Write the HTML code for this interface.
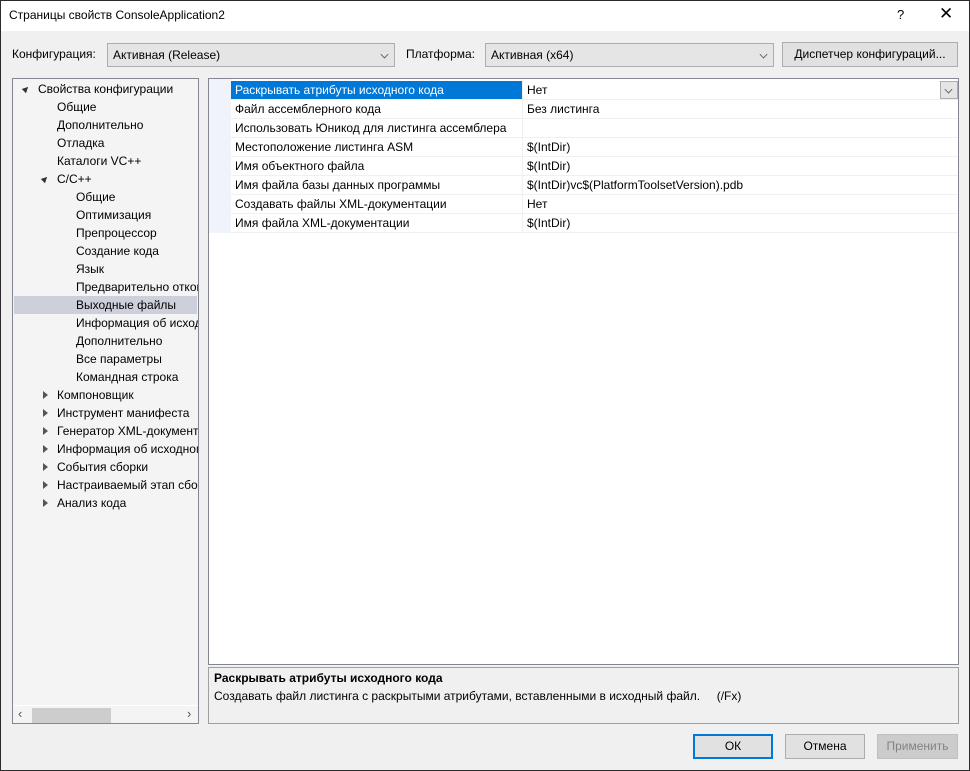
<!DOCTYPE html>
<html><head><meta charset="utf-8"><style>
*{margin:0;padding:0;box-sizing:border-box}
body{width:970px;height:771px;overflow:hidden;background:#f0f0f0;font-family:"Liberation Sans","Noto Sans CJK SC",sans-serif;font-size:12px;color:#000;position:relative}
.win{position:absolute;left:0;top:0;width:970px;height:771px;border:1px solid #2b2b2b}
.a{position:absolute;white-space:nowrap}
.title{left:1px;top:1px;width:968px;height:30px;background:#fff}
.combo{background:#e5e5e5;border:1px solid #adadad;height:24px;line-height:22px;padding-left:5px}
.chev{position:absolute;right:6px;top:7px;width:7px;height:7px;border-right:1px solid #555;border-bottom:1px solid #555;transform:rotate(45deg) scale(.8)}
.btn{background:#e1e1e1;border:1px solid #adadad;text-align:center;line-height:22px;height:25px}
.tree{left:12px;top:78px;width:187px;height:646px;background:#f4f4f4;border:1px solid #828790}
.ti{position:absolute;height:18px;line-height:18px;white-space:nowrap}
.grid{left:208px;top:78px;width:751px;height:587px;background:#fff;border:1px solid #828790}
.row{position:absolute;left:22px;width:727px;height:19px;border-bottom:1px solid #f0f0f0;line-height:18px}
.row .n{position:absolute;left:4px}
.row .v{position:absolute;left:291px;border-left:1px solid #f0f0f0;padding-left:4px;height:18px;width:436px}
.tri{position:absolute;width:0;height:0}
</style></head><body>
<div class="win"></div>
<div class="a title"></div>
<div class="a" style="left:9px;top:8px;font-size:12px">Страницы свойств ConsoleApplication2</div>
<div class="a" style="left:897px;top:7px;font-size:13px">?</div>
<div class="a" style="left:939px;top:4px;font-size:17px">✕</div>

<div class="a" style="left:12px;top:47px">Конфигурация:</div>
<div class="a combo" style="left:107px;top:43px;width:288px">Активная (Release)<span class="chev"></span></div>
<div class="a" style="left:406px;top:47px">Платформа:</div>
<div class="a combo" style="left:485px;top:43px;width:289px">Активная (x64)<span class="chev"></span></div>
<div class="a btn" style="left:782px;top:42px;width:176px">Диспетчер конфигураций...</div>

<div class="a tree">
<div class="tri" style="left:10px;top:7px;border-left:3px solid transparent;border-right:3px solid transparent;border-top:0;border-bottom:6px solid #333;transform:rotate(45deg)"></div>
<div class="ti" style="left:25px;top:1px">Свойства конфигурации</div>
<div class="ti" style="left:44px;top:19px">Общие</div>
<div class="ti" style="left:44px;top:37px">Дополнительно</div>
<div class="ti" style="left:44px;top:55px">Отладка</div>
<div class="ti" style="left:44px;top:73px">Каталоги VC++</div>
<div class="tri" style="left:29px;top:97px;border-left:3px solid transparent;border-right:3px solid transparent;border-bottom:6px solid #333;transform:rotate(45deg)"></div>
<div class="ti" style="left:44px;top:91px">C/C++</div>
<div class="ti" style="left:63px;top:109px">Общие</div>
<div class="ti" style="left:63px;top:127px">Оптимизация</div>
<div class="ti" style="left:63px;top:145px">Препроцессор</div>
<div class="ti" style="left:63px;top:163px">Создание кода</div>
<div class="ti" style="left:63px;top:181px">Язык</div>
<div class="ti" style="left:63px;top:199px;width:122px;overflow:hidden">Предварительно откомпилированные</div>
<div class="ti" style="left:1px;top:217px;width:183px;background:#cdcfdb"></div>
<div class="ti" style="left:63px;top:217px">Выходные файлы</div>
<div class="ti" style="left:63px;top:235px;width:122px;overflow:hidden">Информация об исходниках</div>
<div class="ti" style="left:63px;top:253px">Дополнительно</div>
<div class="ti" style="left:63px;top:271px">Все параметры</div>
<div class="ti" style="left:63px;top:289px">Командная строка</div>
<div id="cl"></div>
<div class="tri" style="left:30px;top:312px;border-top:4px solid transparent;border-bottom:4px solid transparent;border-left:5px solid #555"></div>
<div class="ti" style="left:44px;top:307px">Компоновщик</div>
<div class="tri" style="left:30px;top:330px;border-top:4px solid transparent;border-bottom:4px solid transparent;border-left:5px solid #555"></div>
<div class="ti" style="left:44px;top:325px">Инструмент манифеста</div>
<div class="tri" style="left:30px;top:348px;border-top:4px solid transparent;border-bottom:4px solid transparent;border-left:5px solid #555"></div>
<div class="ti" style="left:44px;top:343px;width:141px;overflow:hidden">Генератор XML-документов</div>
<div class="tri" style="left:30px;top:366px;border-top:4px solid transparent;border-bottom:4px solid transparent;border-left:5px solid #555"></div>
<div class="ti" style="left:44px;top:361px;width:141px;overflow:hidden">Информация об исходном коде</div>
<div class="tri" style="left:30px;top:384px;border-top:4px solid transparent;border-bottom:4px solid transparent;border-left:5px solid #555"></div>
<div class="ti" style="left:44px;top:379px">События сборки</div>
<div class="tri" style="left:30px;top:402px;border-top:4px solid transparent;border-bottom:4px solid transparent;border-left:5px solid #555"></div>
<div class="ti" style="left:44px;top:397px;width:141px;overflow:hidden">Настраиваемый этап сборки</div>
<div class="tri" style="left:30px;top:420px;border-top:4px solid transparent;border-bottom:4px solid transparent;border-left:5px solid #555"></div>
<div class="ti" style="left:44px;top:415px">Анализ кода</div>
<div style="position:absolute;left:0;top:626px;width:185px;height:18px;background:#f4f4f4;border-top:1px solid #fff"></div>
<div style="position:absolute;left:19px;top:629px;width:79px;height:15px;background:#cdcdcd"></div>
<div class="a" style="left:5px;top:627px;font-size:13px;color:#555">‹</div>
<div class="a" style="left:174px;top:627px;font-size:13px;color:#555">›</div>
</div>

<div class="a grid">
<div style="position:absolute;left:0;top:0;width:22px;height:154px;background:#f0f4fa"></div>
<div class="row" style="top:2px"><div style="position:absolute;left:0;top:0;width:291px;height:18px;background:#0078d7"></div><span class="n" style="color:#fff">Раскрывать атрибуты исходного кода</span><span class="v">Нет</span></div>
<div class="row" style="top:21px"><span class="n">Файл ассемблерного кода</span><span class="v">Без листинга</span></div>
<div class="row" style="top:40px"><span class="n">Использовать Юникод для листинга ассемблера</span><span class="v"></span></div>
<div class="row" style="top:59px"><span class="n">Местоположение листинга ASM</span><span class="v">$(IntDir)</span></div>
<div class="row" style="top:78px"><span class="n">Имя объектного файла</span><span class="v">$(IntDir)</span></div>
<div class="row" style="top:97px"><span class="n">Имя файла базы данных программы</span><span class="v">$(IntDir)vc$(PlatformToolsetVersion).pdb</span></div>
<div class="row" style="top:116px"><span class="n">Создавать файлы XML-документации</span><span class="v">Нет</span></div>
<div class="row" style="top:135px"><span class="n">Имя файла XML-документации</span><span class="v">$(IntDir)</span></div>
<div style="position:absolute;left:731px;top:2px;width:18px;height:18px;background:#e5e5e5;border:1px solid #adadad"><span class="chev" style="right:5px;top:4px"></span></div>
</div>

<div class="a" style="left:208px;top:667px;width:751px;height:57px;border:1px solid #a0a0a0;background:#f0f0f0"></div>
<div class="a" style="left:214px;top:671px;font-weight:bold">Раскрывать атрибуты исходного кода</div>
<div class="a" style="left:214px;top:689px">Создавать файл листинга с раскрытыми атрибутами, вставленными в исходный файл.&nbsp;&nbsp;&nbsp;&nbsp; (/Fx)</div>

<div class="a btn" style="left:693px;top:734px;width:80px;border:2px solid #0078d7;line-height:21px">ОК</div>
<div class="a btn" style="left:785px;top:734px;width:80px">Отмена</div>
<div class="a btn" style="left:877px;top:734px;width:81px;background:#ccc;border-color:#bfbfbf;color:#838383">Применить</div>
</body></html>
